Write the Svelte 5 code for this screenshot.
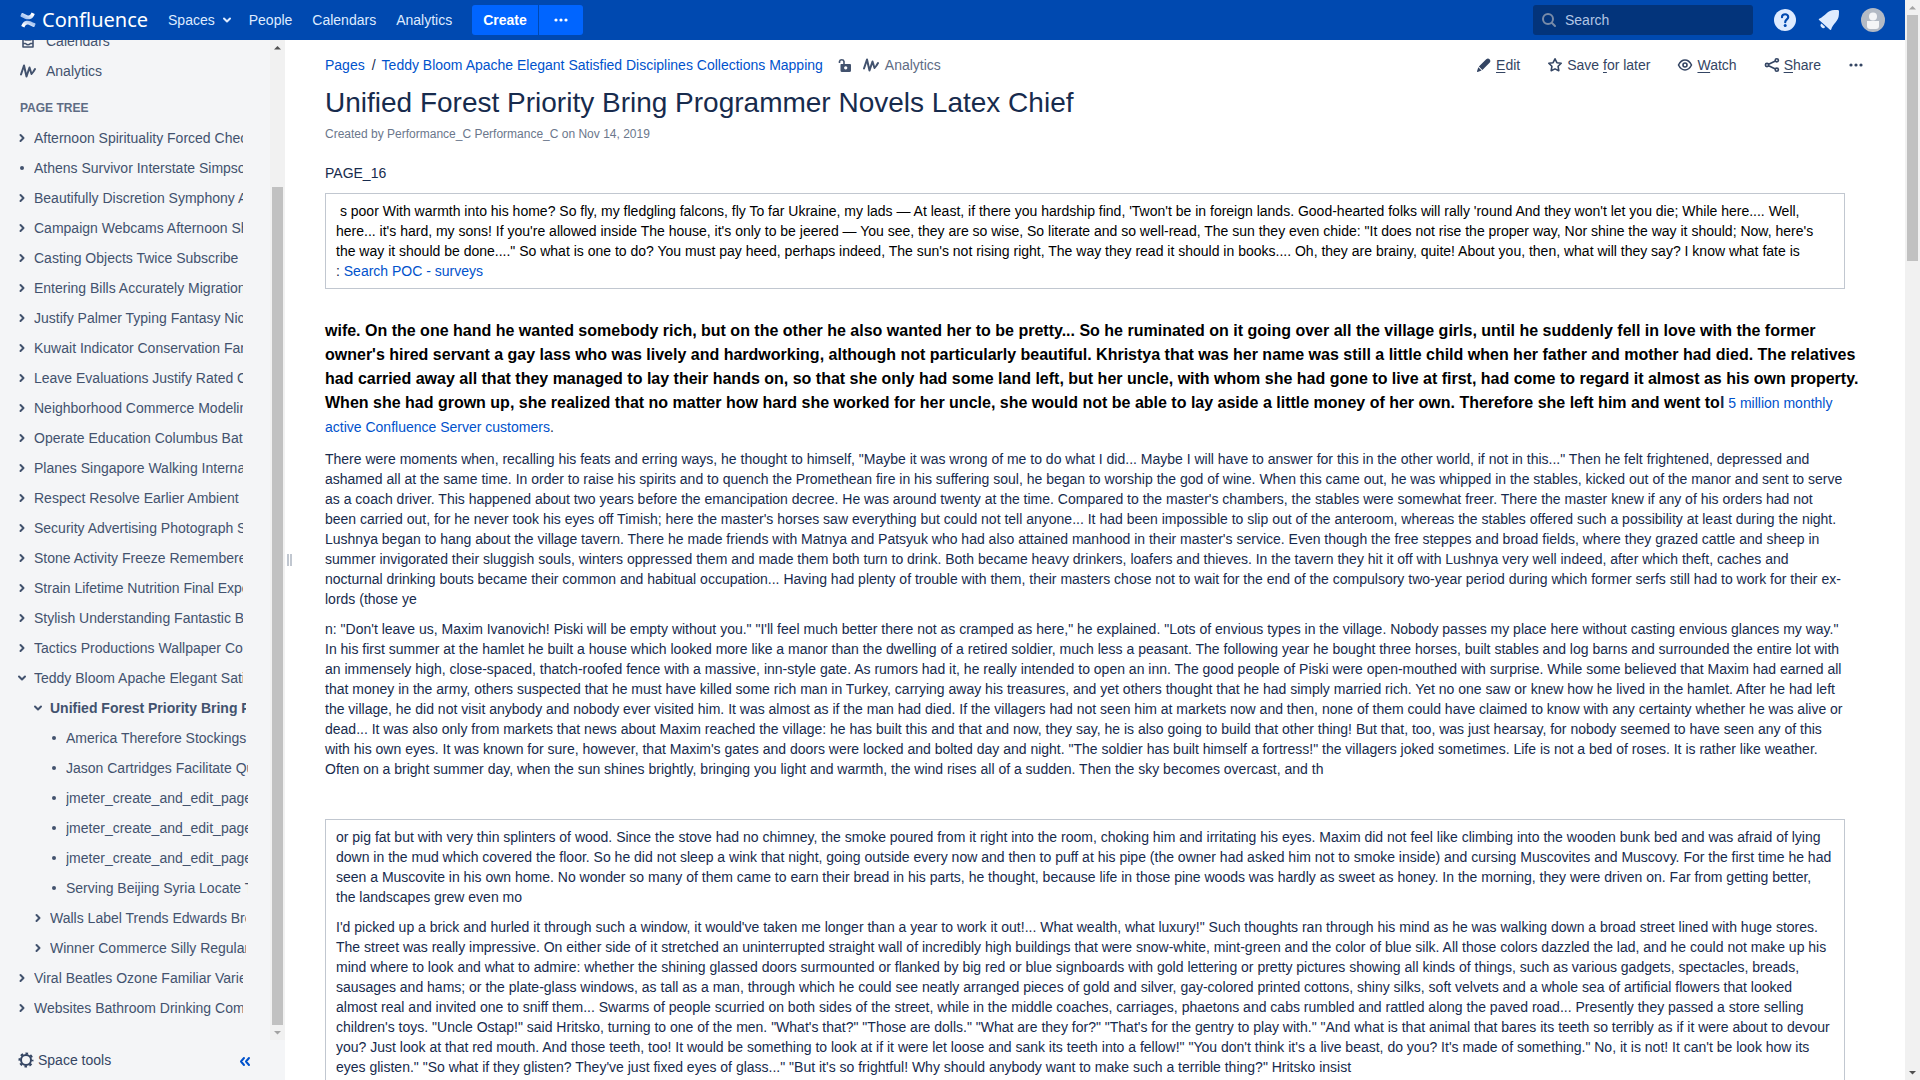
<script>
  const tree = [
    ['Afternoon Spirituality Forced Chec', 1, 'closed'],
    ['Athens Survivor Interstate Simpso', 1, 'leaf'],
    ['Beautifully Discretion Symphony A', 1, 'closed'],
    ['Campaign Webcams Afternoon Sh', 1, 'closed'],
    ['Casting Objects Twice Subscribe', 1, 'closed'],
    ['Entering Bills Accurately Migration', 1, 'closed'],
    ['Justify Palmer Typing Fantasy Nic', 1, 'closed'],
    ['Kuwait Indicator Conservation Fan', 1, 'closed'],
    ['Leave Evaluations Justify Rated C', 1, 'closed'],
    ['Neighborhood Commerce Modeling', 1, 'closed'],
    ['Operate Education Columbus Bat', 1, 'closed'],
    ['Planes Singapore Walking Interna', 1, 'closed'],
    ['Respect Resolve Earlier Ambient', 1, 'closed'],
    ['Security Advertising Photograph S', 1, 'closed'],
    ['Stone Activity Freeze Remembere', 1, 'closed'],
    ['Strain Lifetime Nutrition Final Expe', 1, 'closed'],
    ['Stylish Understanding Fantastic B', 1, 'closed'],
    ['Tactics Productions Wallpaper Co', 1, 'closed'],
    ['Teddy Bloom Apache Elegant Satisfied', 1, 'open'],
    ['Unified Forest Priority Bring Programmer', 2, 'open', true],
    ['America Therefore Stockings', 3, 'leaf'],
    ['Jason Cartridges Facilitate Qu', 3, 'leaf'],
    ['jmeter_create_and_edit_page', 3, 'leaf'],
    ['jmeter_create_and_edit_page', 3, 'leaf'],
    ['jmeter_create_and_edit_page', 3, 'leaf'],
    ['Serving Beijing Syria Locate T', 3, 'leaf'],
    ['Walls Label Trends Edwards Bro', 2, 'closed'],
    ['Winner Commerce Silly Regular', 2, 'closed'],
    ['Viral Beatles Ozone Familiar Varie', 1, 'closed'],
    ['Websites Bathroom Drinking Com', 1, 'closed']
  ];
  const marks = {
    closed: 'M6.5 5 9.5 8 6.5 11',
    open: 'M5 6.5 8 9.5 11 6.5'
  };
</script>

{#snippet wave()}
  <svg class="icon" viewBox="0 0 16 16" aria-hidden="true">
    <path d="M1 11.5 4 2.5 6.5 13.5 9.5 4.5 11.5 11 13.5 8.5 15 6" fill="none" stroke="currentColor" stroke-width="2" stroke-linejoin="round" stroke-linecap="round" />
  </svg>
{/snippet}

{#snippet dots()}
  <svg class="icon" viewBox="0 0 16 16" aria-hidden="true">
    <circle cx="3" cy="8" r="1.6" /><circle cx="8" cy="8" r="1.6" /><circle cx="13" cy="8" r="1.6" />
  </svg>
{/snippet}

<div class="app">
  <div class="window">
    <header>
      <a class="logo" href="#home" aria-label="Confluence">
        <svg class="icon" viewBox="0 0 16 16" aria-hidden="true">
          <defs>
            <linearGradient id="fadeTop" x1="1" y1="0" x2="0.2" y2="0.6"><stop offset="0.3" stop-color="#fff" /><stop offset="1" stop-color="#a9c6f2" /></linearGradient>
            <linearGradient id="fadeLow" x1="0" y1="1" x2="0.8" y2="0.4"><stop offset="0.3" stop-color="#fff" /><stop offset="1" stop-color="#a9c6f2" /></linearGradient>
          </defs>
          <path d="M1.6 1.2 0.5 3.8Q0.4 4.4 0.9 4.7C4.6 6.4 6.5 7.7 9.5 7.3C12 7 13.4 5 14.6 2.5Q14.8 1.9 14.3 1.7L11.6 0.6C10.4 3.3 9.4 3.9 7.3 3.3L2.6 1.1Q1.9 0.8 1.6 1.2Z" fill="url(#fadeTop)" />
          <path d="M14.4 14.8 15.5 12.2Q15.6 11.6 15.1 11.3C11.4 9.6 9.5 8.3 6.5 8.7C4 9 2.6 11 1.4 13.5Q1.2 14.1 1.7 14.3L4.4 15.4C5.6 12.7 6.6 12.1 8.7 12.7L13.4 14.9Q14.1 15.2 14.4 14.8Z" fill="url(#fadeLow)" />
        </svg>
        <span>Confluence</span>
      </a>
      <nav class="primary">
        <button class="plain">Spaces
          <svg class="icon" viewBox="0 0 16 16" aria-hidden="true"><path d="M5 6.5 8 9.5 11 6.5" class="line" /></svg>
        </button>
        <a href="#people">People</a>
        <a href="#calendars">Calendars</a>
        <a href="#analytics">Analytics</a>
      </nav>
      <div class="create">
        <button>Create</button>
        <button class="more" aria-label="Create from template">{@render dots()}</button>
      </div>
      <label class="search">
        <svg class="icon" viewBox="0 0 16 16" aria-hidden="true"><circle cx="7" cy="7" r="5" /><path d="M11 11 14 14" /></svg>
        <input type="text" placeholder="Search" aria-label="Search" />
      </label>
      <div class="tools">
        <button class="plain" aria-label="Help">
          <svg class="big" viewBox="0 0 24 24" aria-hidden="true"><circle cx="12" cy="12" r="11" fill="#deebff" /><path d="M9 9.2C9 5.2 15.4 5.4 15.2 9.2C15.1 11.3 12.2 11.5 12.2 14.2" fill="none" stroke="#0049b0" stroke-width="2.2" stroke-linecap="round" /><circle cx="12.2" cy="17.5" r="1.5" fill="#0049b0" /></svg>
        </button>
        <button class="plain" aria-label="Notifications">
          <svg class="big" viewBox="0 0 24 24" aria-hidden="true"><path d="M2.2 10.7C1.6 11 1.7 11.6 2.1 12L13 21.7C13.5 22.1 14 21.9 14.2 21.4C15.6 15.9 21.7 13.5 21.9 6.5L22 3.3Q22 2 20.7 2H17.5C10.500 2 8 8.300 2.200 10.700Z" fill="#deebff" /><path d="M4.500 15.600A2.500 2.500 0 1 0 8.200 18.900Z" fill="#deebff" /></svg>
        </button>
        <button class="plain" aria-label="User menu">
          <svg class="big" viewBox="0 0 24 24" aria-hidden="true"><circle cx="12" cy="12" r="12" fill="#b3bac5" /><circle cx="12" cy="8.500" r="4" fill="#f4f5f7" /><path d="M6 13h12v5q0 3-3 3H9q-3 0-3-3Z" fill="#f4f5f7" /></svg>
        </button>
      </div>
    </header>

    <div class="body">
      <aside>
        <div class="scroller">
          <div class="side">
            <a class="link" href="#calendars">
              <svg class="icon" viewBox="0 0 16 16" aria-hidden="true"><path d="M3 3H13V14H3ZM3 10.500H5.500Q8 13 10.500 10.500H13M5 7H11" class="line thin" /></svg>
              Calendars
            </a>
            <a class="link" href="#analytics">{@render wave()} Analytics</a>
            <h2>PAGE TREE</h2>
            <ul>
              {#each tree as [name, level, state, current]}
                <li class="l{level}">
                  {#if state === 'leaf'}
                    <svg class="icon" viewBox="0 0 16 16" aria-hidden="true"><circle cx="8" cy="8" r="2" /></svg>
                  {:else}
                    <button class="plain" aria-label="Toggle {name}"><svg class="icon" viewBox="0 0 16 16" aria-hidden="true"><path d={marks[state]} class="line" /></svg></button>
                  {/if}
                  <a href="#page" class:current>{name}</a>
                </li>
              {/each}
            </ul>
          </div>
          <div class="bar sidebar-bar" aria-hidden="true">
            <svg viewBox="0 0 15 15"><path d="M4 9.500 7.500 6 11 9.500Z" fill="#505050" /></svg>
            <div class="track"><i class="thumb"></i></div>
            <svg viewBox="0 0 15 15"><path d="M4 6 7.500 9.500 11 6Z" fill="#a3a3a3" /></svg>
          </div>
        </div>
        <footer>
          <button class="plain">
            <svg class="icon" viewBox="0 0 16 16" aria-hidden="true"><circle cx="8" cy="8" r="5" fill="none" stroke="currentColor" stroke-width="2" /><circle cx="8" cy="8" r="6.500" fill="none" stroke="currentColor" stroke-width="2" stroke-dasharray="2.600 2.505" stroke-dashoffset="1.300" /></svg>
            Space tools
          </button>
          <button class="plain collapse" aria-label="Collapse sidebar">
            <svg class="icon" viewBox="0 0 16 16" aria-hidden="true"><path d="M7 6 4 9.500 7 13M12 6 9 9.500 12 13" class="line" /></svg>
          </button>
        </footer>
      </aside>
      <div class="grip" aria-hidden="true"><i></i><i></i></div>

      <main>
        <div class="top">
          <nav class="crumbs">
            <a href="#pages">Pages</a><span>/</span><a href="#parent">Teddy Bloom Apache Elegant Satisfied Disciplines Collections Mapping</a>
            <button class="plain lock" aria-label="Unrestricted">
              <svg class="icon" viewBox="0 0 16 16" aria-hidden="true"><path d="M2.500 6V4.500A2.300 2.300 0 0 1 7 4.500V7" fill="none" stroke="currentColor" stroke-width="1.600" /><path fill-rule="evenodd" d="M4 7H13Q14 7 14 8V13.500Q14 15 12.500 15H5Q3.500 15 3.500 13.500V8Q3.500 7 4 7ZM8.700 9.300A1.600 1.600 0 1 0 8.710 9.300Z" /></svg>
            </button>
            <button class="plain stats">{@render wave()} <span>Analytics</span></button>
          </nav>
          <div class="actions">
            <button class="plain">
              <svg class="icon" viewBox="0 0 16 16" aria-hidden="true"><path d="M10.200 2.200Q12 0.600 13.600 2.200Q15.300 3.800 13.800 5.600L6.400 13 2.900 9.500ZM2.300 10.300 5.600 13.600 1.600 14.900Q0.900 15 1 14.200Z" /></svg>
              <span><u>E</u>dit</span>
            </button>
            <button class="plain">
              <svg class="icon" viewBox="0 0 16 16" aria-hidden="true"><path d="M8 1.800 9.900 5.700 14.200 6.300 11.100 9.300 11.800 13.700 8 11.900 4.200 13.700 4.900 9.300 1.800 6.300 6.100 5.700Z" class="line thin" /></svg>
              <span>Save <u>f</u>or later</span>
            </button>
            <button class="plain">
              <svg class="icon" viewBox="0 0 16 16" aria-hidden="true"><path d="M1.500 8Q4 3 8 3T14.500 8Q12 13 8 13T1.500 8Z" class="line thin" /><circle cx="8" cy="8" r="2" class="line thin" /></svg>
              <span><u>W</u>atch</span>
            </button>
            <button class="plain">
              <svg class="icon" viewBox="0 0 16 16" aria-hidden="true"><path d="M3 8 12.500 3.500M3 8 12.500 12.500" class="line thin" /><g fill="#fff" stroke="currentColor" stroke-width="1.600"><circle cx="3" cy="8" r="1.600" /><circle cx="12.800" cy="3.300" r="1.600" /><circle cx="12.800" cy="12.700" r="1.600" /></g></svg>
              <span><u>S</u>hare</span>
            </button>
            <button class="plain" aria-label="More actions">{@render dots()}</button>
          </div>
        </div>
        <h1>Unified Forest Priority Bring Programmer Novels Latex Chief</h1>
        <p class="byline">Created by Performance_C Performance_C on Nov 14, 2019</p>

        <article>
          <p>PAGE_16</p>
          <div class="cell">
            <p><span class="black">&nbsp;s poor With warmth into his home? So fly, my fledgling falcons, fly To far Ukraine, my lads — At least, if there you hardship find, 'Twon't be in foreign lands. Good-hearted folks will rally 'round And they won't let you die; While here.... Well, here... it's hard, my sons! If you're allowed inside The house, it's only to be jeered — You see, they are so wise, So literate and so well-read, The sun they even chide: "It does not rise the proper way, Nor shine the way it should; Now, here's the way it should be done...." So what is one to do? You must pay heed, perhaps indeed, The sun's not rising right, The way they read it should in books.... Oh, they are brainy, quite! About you, then, what will they say? I know what fate is</span><br />: <a href="#poc">Search POC - surveys</a></p>
          </div>
          <p class="lead"><strong>wife. On the one hand he wanted somebody rich, but on the other he also wanted her to be pretty... So he ruminated on it going over all the village girls, until he suddenly fell in love with the former<br />owner's hired servant a gay lass who was lively and hardworking, although not particularly beautiful. Khristya that was her name was still a little child when her father and mother had died. The relatives<br />had carried away all that they managed to lay their hands on, so that she only had some land left, but her uncle, with whom she had gone to live at first, had come to regard it almost as his own property.<br />When she had grown up, she realized that no matter how hard she worked for her uncle, she would not be able to lay aside a little money of her own. Therefore she left him and went to</strong><b>l</b> <a href="#customers">5 million monthly<br />active Confluence Server customers</a>.</p>
          <p>There were moments when, recalling his feats and erring ways, he thought to himself, "Maybe it was wrong of me to do what I did... Maybe I will have to answer for this in the other world, if not in this..." Then he felt frightened, depressed and ashamed all at the same time. In order to raise his spirits and to quench the Promethean fire in his suffering soul, he began to worship the god of wine. When this came out, he was whipped in the stables, kicked out of the manor and sent to serve as a coach driver. This happened about two years before the emancipation decree. He was around twenty at the time. Compared to the master's chambers, the stables were somewhat freer. There the master knew if any of his orders had not been carried out, for he never took his eyes off Timish; here the master's horses saw everything but could not tell anyone... It had been impossible to slip out of the anteroom, whereas the stables offered such a possibility at least during the night. Lushnya began to hang about the village tavern. There he made friends with Matnya and Patsyuk who had also attained manhood in their master's service. Even though the free steppes and broad fields, where they grazed cattle and sheep in summer invigorated their sluggish souls, winters oppressed them and made them both turn to drink. Both became heavy drinkers, loafers and thieves. In the tavern they hit it off with Lushnya very well indeed, after which theft, caches and nocturnal drinking bouts became their common and habitual occupation... Having had plenty of trouble with them, their masters chose not to wait for the end of the compulsory two-year period during which former serfs still had to work for their ex-lords (those ye</p>
          <p>n: "Don't leave us, Maxim Ivanovich! Piski will be empty without you." "I'll feel much better there not as cramped as here," he explained. "Lots of envious types in the village. Nobody passes my place here without casting envious glances my way." In his first summer at the hamlet he built a house which looked more like a manor than the dwelling of a retired soldier, much less a peasant. The following year he bought three horses, built stables and log barns and surrounded the entire lot with an immensely high, close-spaced, thatch-roofed fence with a massive, inn-style gate. As rumors had it, he really intended to open an inn. The good people of Piski were open-mouthed with surprise. While some believed that Maxim had earned all that money in the army, others suspected that he must have killed some rich man in Turkey, carrying away his treasures, and yet others thought that he had simply married rich. Yet no one saw or knew how he lived in the hamlet. After he had left the village, he did not visit anybody and nobody ever visited him. It was almost as if the man had died. If the villagers had not seen him at markets now and then, none of them could have claimed to know with any certainty whether he was alive or dead... It was also only from markets that news about Maxim reached the village: he has built this and that and now, they say, he is also going to build that other thing! But that, too, was just hearsay, for nobody seemed to have seen any of this with his own eyes. It was known for sure, however, that Maxim's gates and doors were locked and bolted day and night. "The soldier has built himself a fortress!" the villagers joked sometimes. Life is not a bed of roses. It is rather like weather. Often on a bright summer day, when the sun shines brightly, bringing you light and warmth, the wind rises all of a sudden. Then the sky becomes overcast, and th</p>
          <div class="cell second">
            <p>or pig fat but with very thin splinters of wood. Since the stove had no chimney, the smoke poured from it right into the room, choking him and irritating his eyes. Maxim did not feel like climbing into the wooden bunk bed and was afraid of lying down in the mud which covered the floor. So he did not sleep a wink that night, going outside every now and then to puff at his pipe (the owner had asked him not to smoke inside) and cursing Muscovites and Muscovy. For the first time he had seen a Muscovite in his own home. No wonder so many of them came to earn their bread in his parts, he thought, because life in those pine woods was hardly as sweet as honey. In the morning, they were driven on. Far from getting better, the landscapes grew even mo</p>
            <p>I'd picked up a brick and hurled it through such a window, it would've taken me longer than a year to work it out!... What wealth, what luxury!" Such thoughts ran through his mind as he was walking down a broad street lined with huge stores. The street was really impressive. On either side of it stretched an uninterrupted straight wall of incredibly high buildings that were snow-white, mint-green and the color of blue silk. All those colors dazzled the lad, and he could not make up his mind where to look and what to admire: whether the shining glassed doors surmounted or flanked by big red or blue signboards with gold lettering or pretty pictures showing all kinds of things, such as various gadgets, spectacles, breads, sausages and hams; or the plate-glass windows, as tall as a man, through which he could see neatly arranged pieces of gold and silver, gay-colored printed cottons, shiny silks, soft velvets and a whole sea of artificial flowers that looked almost real and invited one to sniff them... Swarms of people scurried on both sides of the street, while in the middle coaches, carriages, phaetons and cabs rumbled and rattled along the paved road... Presently they passed a store selling children's toys. "Uncle Ostap!" said Hritsko, turning to one of the men. "What's that?" "Those are dolls." "What are they for?" "That's for the gentry to play with." "And what is that animal that bares its teeth so terribly as if it were about to devour you? Just look at that red mouth. And those teeth, too! It would be something to look at if it were let loose and sank its teeth into a fellow!" "You don't think it's a live beast, do you? It's made of something." No, it is not! It can't be look how its eyes glisten." "So what if they glisten? They've just fixed eyes of glass..." "But it's so frightful! Why should anybody want to make such a terrible thing?" Hritsko insist</p>
            <p>&nbsp;</p>
          </div>
        </article>
      </main>
    </div>
  </div>
  <div class="bar page-bar" aria-hidden="true">
    <svg viewBox="0 0 15 15"><path d="M4 9.500 7.500 6 11 9.500Z" fill="#a3a3a3" /></svg>
    <div class="track"><i class="thumb"></i></div>
    <svg viewBox="0 0 15 15"><path d="M4 6 7.500 9.500 11 6Z" fill="#505050" /></svg>
  </div>
</div>

<style>
  :global(body) {
    margin: 0;
    overflow: hidden;
    background: #fff;
    color: #172b4d;
    font: 14px/20px "Liberation Sans", Arial, sans-serif;
  }
  .app { display: flex; height: 100vh; }
  .window { flex: 1; min-width: 0; display: flex; flex-direction: column; }
  .icon { width: 16px; height: 16px; flex: none; fill: currentColor; display: block; }
  .big { width: 24px; height: 24px; display: block; }
  .line { fill: none; stroke: currentColor; stroke-width: 2; stroke-linecap: round; stroke-linejoin: round; }
  .thin { stroke-width: 1.6; }
  a { color: #0052cc; text-decoration: none; }
  button { font: inherit; cursor: pointer; }
  .plain { display: flex; align-items: center; gap: 4px; padding: 0; border: 0; background: none; color: inherit; }

  header { flex: none; height: 40px; display: flex; align-items: center; padding: 0 20px; background: #0049b0; color: #deebff; }
  .logo { display: flex; align-items: center; gap: 6px; margin-right: 20px; color: #fff; font: 20px/24px "Noto Sans", sans-serif; }
  .primary { display: flex; gap: 20px; margin-right: 20px; }
  .primary a { color: inherit; }
  .primary .plain { margin-right: -6px; }
  .create { display: flex; gap: 1px; }
  .create button { display: flex; align-items: center; height: 30px; padding: 0 11px; border: 0; border-radius: 3px 0 0 3px; background: #0065ff; color: #fff; font-weight: 700; }
  .create .more { border-radius: 0 3px 3px 0; padding: 0 14px; }
  .search { display: flex; align-items: center; gap: 8px; box-sizing: border-box; width: 220px; height: 30px; margin-left: auto; padding: 0 8px; border-radius: 3px; background: #03347b; }
  .search .icon { fill: none; stroke: #798ba8; stroke-width: 2; stroke-linecap: round; }
  .search input { flex: 1; min-width: 0; border: 0; padding: 0; background: none; color: #deebff; font: inherit; outline: 0; }
  .search input::placeholder { color: #b2c6e5; opacity: 1; }
  .tools { display: flex; gap: 20px; margin-left: 20px; }

  .body { flex: 1; min-height: 0; display: flex; }
  aside { flex: none; width: 285px; display: flex; flex-direction: column; background: #f4f5f7; color: #42526e; }
  aside a { color: inherit; }
  .scroller { flex: 1; min-height: 0; display: flex; }
  .side { flex: 1; min-width: 0; overflow: hidden; display: flex; flex-direction: column; justify-content: flex-end; padding-bottom: 17px; }
  .link { flex: none; display: flex; align-items: center; gap: 10px; height: 30px; padding-left: 20px; }
  h2 { flex: none; margin: 12px 0 5px; padding-left: 20px; font-size: 12px; line-height: 20px; color: #5e6c84; }
  ul { flex: none; margin: 0; padding: 0; list-style: none; }
  li { display: flex; align-items: center; gap: 4px; height: 30px; }
  li a { flex: 1; min-width: 0; overflow: hidden; white-space: nowrap; }
  .current { font-weight: 700; }
  .l1 { padding: 0 27px 0 14px; }
  .l2 { padding: 0 24px 0 30px; }
  .l3 { padding: 0 22px 0 46px; }
  footer { flex: none; display: flex; align-items: center; justify-content: space-between; height: 40px; padding: 0 32px 0 18px; }
  footer .plain { color: #344563; }
  footer .collapse { color: #0052cc; }

  .bar { flex: none; width: 15px; display: flex; flex-direction: column; background: #f1f1f1; }
  .bar svg { width: 15px; height: 15px; flex: none; }
  .track { flex: 1; padding: 0 2px; }
  .thumb { display: block; height: 100%; background: #c1c1c1; }
  .sidebar-bar .track { display: flex; align-items: flex-end; }
  .sidebar-bar .thumb { width: 100%; height: 86.4%; }
  .page-bar .thumb { height: 23.4%; }

  .grip { flex: none; align-self: center; display: flex; gap: 1px; padding: 0 0 0 2px; }
  .grip i { width: 2px; height: 12px; background: #c1c7d0; }

  main { flex: 1; min-width: 0; overflow: hidden; padding: 10px 60px 0 33px; }
  .top { display: flex; justify-content: space-between; align-items: center; height: 30px; margin-right: -19px; }
  .crumbs { display: flex; align-items: center; white-space: nowrap; }
  .crumbs > span { margin: 0 6px 0 7px; }
  .lock { margin: 0 10px 0 14px; color: #42526e; }
  .stats { gap: 6px; color: #42526e; }
  .stats span { color: #5e6c84; }
  .actions { display: flex; gap: 27px; color: #344563; }
  .actions span { white-space: nowrap; }
  u { text-underline-offset: 2px; }
  h1 { margin: 7px 0 0; font-size: 28px; line-height: 32px; font-weight: 400; }
  .byline { margin: 5px 0 0; font-size: 12px; line-height: 20px; color: #6b778c; }
  article { margin-top: 19px; }
  article p { margin: 10px 0 0; }
  .cell { margin-top: 10px; padding: 7px 10px; border: 1px solid #c1c7d0; }
  .cell p:first-child { margin-top: 0; }
  .black, strong { color: #000; }
  .second { margin-top: 40px; }
  .lead { line-height: 24px; white-space: nowrap; }
  article .lead { margin-top: 30px; }
  .lead strong, .lead b { font-size: 16px; }
</style>
